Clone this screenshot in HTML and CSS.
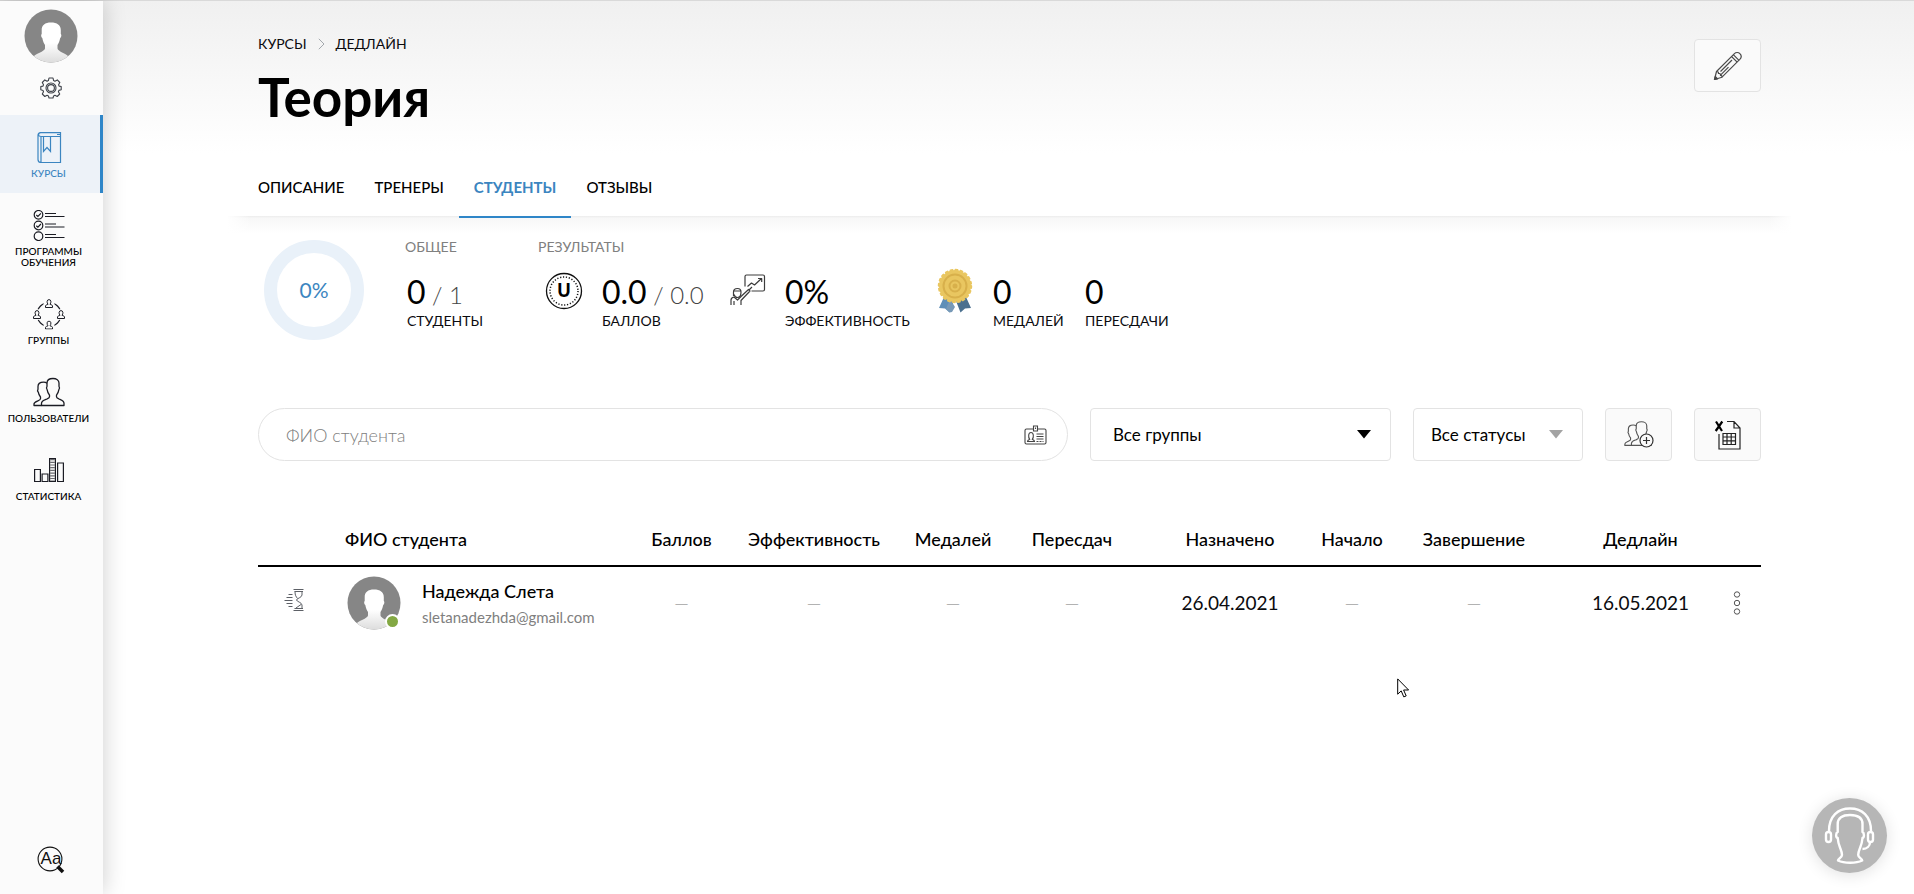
FILE: index.html
```html
<!DOCTYPE html>
<html lang="ru">
<head>
<meta charset="utf-8">
<title>Теория</title>
<link rel="stylesheet" href="styles.css">
</head>
<body>
<svg class="defs" aria-hidden="true">
  <defs>
    <linearGradient id="bust" x1="0" y1="0" x2="0" y2="1"><stop offset="0.5" stop-color="#fff"/><stop offset="1" stop-color="#dcdcdc"/></linearGradient>
    <clipPath id="round"><circle cx="27" cy="27" r="26.5"/></clipPath>
    <symbol id="avatar" viewBox="0 0 54 54">
      <g clip-path="url(#round)">
        <rect width="54" height="54" fill="#868686"/>
        <path fill="url(#bust)" d="M27 13.5c-6 0-9.3 2.6-9.3 7.500v4c-1 .6-.6 3.500.6 4 .6 3.500 1.700 5.500 2.700 7v3.500c0 3-10 5-13 9.500V54h38v-5c-3-4.500-12.500-6.500-12.500-9.500V36c1-1.500 2.100-3.500 2.700-7 1.200-.5 1.600-3.400.6-4v-4c0-4.900-3.800-7.500-9.800-7.500z"/>
      </g>
    </symbol>
    <symbol id="people" viewBox="0 0 32 31">
      <g fill="none" stroke="currentColor" stroke-width="1.3" stroke-linejoin="round">
        <path d="M8.500 28.500H31v-2.200c0-2.600-2.700-3.300-5-4.300-1.700-.7-2.500-1-2.500-2.300v-1.500c1.300-1.700 2-3.300 2.300-5.400.8-1 .9-2.500.2-3.500V6c0-2.700-2.500-4.500-6-4.500S14 3.300 14 6v3.300c-.7 1-.6 2.500.2 3.500.3 2.100 1 3.700 2.300 5.400v1.500c0 1.300-.8 1.600-2.500 2.300-2.500 1-5.500 1.700-5.500 4.300z"/>
        <path d="M14 6.300c-1-.9-2.300-1.100-3.500-1.100-3.300 0-5.500 1.600-5.500 4.300v2.700c-.6 1-.4 2.300.3 3 .3 2 1 3.300 2.200 4.800v1.700c0 1.100-1.700 1.700-3.200 2.400C2.300 25 1 25.600 1 27v1.500h7.500"/>
      </g>
    </symbol>
    <symbol id="person" viewBox="0 0 8 9">
      <path fill="#fbfbfb" stroke="currentColor" stroke-width="1" d="M.5 8.500V7c0-1 1.500-1.300 2.500-1.600C1.600 3.500 1.700.6 4 .6s2.400 2.900 1 4.800C6 5.700 7.500 6 7.500 7v1.500z"/>
    </symbol>
  </defs>
</svg>

<div class="app">
  <aside class="sidebar">
    <a class="profile" href="#" aria-label="Профиль"><svg width="54" height="54"><use href="#avatar"/></svg></a>
    <button class="gear" type="button" aria-label="Настройки">
      <svg width="22" height="22" viewBox="0 0 22 22" fill="none" stroke="#3c4048" stroke-width="1.100" stroke-linejoin="round">
        <path d="M9 1h4l.6 2.600 1.300.6 2.400-1.300 2.500 2.600-1.200 2.300.5 1.300L21.200 9.500v3.200l-2.300.7-.5 1.300 1.300 2.300-2.500 2.500-2.300-1.200-1.300.6L13 21H9l-.6-2.100-1.300-.6-2.300 1.200-2.500-2.500 1.200-2.300-.5-1.300L.8 12.700V9.500L3 9.100l.5-1.300-1.200-2.300 2.500-2.600 2.300 1.300 1.300-.6z"/>
        <circle cx="11" cy="11" r="5"/><circle cx="11" cy="11" r="3.400"/>
      </svg>
    </button>
    <nav class="menu">
      <a class="menu-item active" href="#">
        <svg width="32" height="31" viewBox="0 0 32 31" fill="none" stroke="currentColor" stroke-width="1.200">
          <path d="M27.500 4.500v26H8c-2 0-3-1-3-3V3.500C5 1.700 6 .6 7.700.6h19.800v3.900M27 4.500H8C4.500 4.500 5 .8 7.700.6M8 4.500v26M24 2.500h3"/>
          <path d="M10.500 4.500v15l3.500-4 3.500 4v-15"/>
        </svg>
        <span>КУРСЫ</span>
      </a>
      <a class="menu-item" href="#">
        <svg width="32" height="31" viewBox="0 0 32 31" fill="none" stroke="currentColor" stroke-width="1.200">
          <circle cx="5.500" cy="4.800" r="4.300"/><circle cx="5.500" cy="15.500" r="4.300"/><circle cx="5.500" cy="26.200" r="4.300"/>
          <path d="M3.300 5l1.600 1.500 3-3.200M3.300 15.700l1.600 1.500 3-3.200M12 3.500h11M12 6.500h19.500M12 14h11M12 17h19.500M12 24.500h11M12 27.500h19.500"/>
        </svg>
        <span>ПРОГРАММЫ ОБУЧЕНИЯ</span>
      </a>
      <a class="menu-item" href="#">
        <svg width="32" height="31" viewBox="0 0 32 31">
          <circle cx="16" cy="15.500" r="12" fill="none" stroke="currentColor" stroke-width="1.200"/>
          <g fill="#fbfbfb"><circle cx="16" cy="5" r="5.500"/><circle cx="16" cy="26" r="5.500"/><circle cx="4" cy="15.500" r="5.500"/><circle cx="28" cy="15.500" r="5.500"/></g>
          <use href="#person" x="12" y="0" width="8" height="9"/><use href="#person" x="12" y="21.500" width="8" height="9"/>
          <use href="#person" x="0" y="11" width="8" height="9"/><use href="#person" x="24" y="11" width="8" height="9"/>
        </svg>
        <span>ГРУППЫ</span>
      </a>
      <a class="menu-item" href="#">
        <svg width="32" height="31"><use href="#people"/></svg>
        <span>ПОЛЬЗОВАТЕЛИ</span>
      </a>
      <a class="menu-item" href="#">
        <svg width="32" height="31" viewBox="0 0 32 31" fill="none" stroke="currentColor" stroke-width="1.200">
          <path d="M1.600 26.500v-12h5.800v12zM9.100 26.500v-7.500h5.800v7.500zM16.600 26.500v-23h5.800v23zM24.600 26.500v-18.500h5.800v18.500z"/>
          <path d="M19.500 4v22" stroke-width="4.500" stroke-dasharray="1.200 1.500" opacity=".65"/>
        </svg>
        <span>СТАТИСТИКА</span>
      </a>
    </nav>
    <button class="zoom-text" type="button" aria-label="Размер текста">
      <svg width="28" height="28" viewBox="0 0 28 28">
        <circle cx="13" cy="13" r="11.900" fill="none" stroke="#111" stroke-width="1.100"/>
        <path d="M20.500 20.500l5.500 5.500" stroke="#111" stroke-width="3.500"/>
        <text x="14" y="18" class="aa">Aa</text>
      </svg>
    </button>
  </aside>

  <main class="page">
    <header class="page-head">
      <div>
        <nav class="crumbs">
          <a href="#">КУРСЫ</a>
          <svg width="7" height="12" viewBox="0 0 7 12" fill="none" stroke="#a3a8ad"><path d="M.8.800L6 6 .8 11.200"/></svg>
          <a href="#">ДЕДЛАЙН</a>
        </nav>
        <h1>Теория</h1>
      </div>
      <button class="square edit" type="button" aria-label="Редактировать">
        <svg width="30" height="30" viewBox="0 0 30 30" fill="none" stroke="#4a4a4a" stroke-width="1.200" stroke-linejoin="round">
          <path d="M1.500 28.500l2-8L21.200 2.800c1.800-1.800 4.300-1.600 5.700-.1 1.500 1.500 1.600 3.900-.1 5.700L9 26.200z"/>
          <path d="M3.500 20.500c1.500 0 2 .6 2 2 1.600-.2 2.200.5 2 1.900 1.300-.1 1.600.7 1.500 1.800M18.500 5.500l5.700 5.700M20.300 3.700l5.700 5.700M7.500 24.200l8-8M7.500 20.500L19 9"/>
          <path d="M1.500 28.500l.8-3 2.300 2.300z" fill="#333"/>
        </svg>
      </button>
    </header>

    <nav class="tabs">
      <a href="#">ОПИСАНИЕ</a>
      <a href="#">ТРЕНЕРЫ</a>
      <a class="current" href="#">СТУДЕНТЫ</a>
      <a href="#">ОТЗЫВЫ</a>
    </nav>

    <section class="stats">
      <div class="donut">0%</div>
      <div class="stat-group total">
        <h2>ОБЩЕЕ</h2>
        <div class="stat"><p>0<small> / 1</small></p><span>СТУДЕНТЫ</span></div>
      </div>
      <div class="stat-group">
        <h2>РЕЗУЛЬТАТЫ</h2>
        <div class="results">
          <svg class="coin" width="38" height="38" viewBox="0 0 38 38">
            <circle cx="19" cy="19" r="17.500" fill="none" stroke="#111" stroke-width="1.300"/>
            <circle cx="19" cy="19" r="14" fill="none" stroke="#111" stroke-width="1.500" stroke-dasharray="1.200 1.732"/>
            <text x="19" y="25" class="coin-letter">U</text>
          </svg>
          <div class="stat points"><p>0.0<small> / 0.0</small></p><span>БАЛЛОВ</span></div>
          <svg class="presenter" width="36" height="36" viewBox="0 0 36 36" fill="none" stroke="#3c3c3c" stroke-width="1.200" stroke-linejoin="round">
            <path d="M15 14.500V4.500c0-1 .5-1.500 1.500-1.500h16.500c1 0 1.500.5 1.500 1.500v13c0 1-.5 1.500-1.500 1.500H21.500"/>
            <path d="M17.500 14.500l4-3.500 3 2 7-6.500M28 6.500h3.700V10"/>
            <path d="M3.500 24v-4c0-2.500 1.500-3.500 4-3.500s3.500 1 3.500 3.500c0 3.500-1.500 5.500-3.500 5.500s-3-1.500-3.500-3M3.500 19h7"/>
            <path d="M1 33v-5c0-1.500 1-2.500 3-3l3.500 3 3.500-3.500L18.500 17.500l1.500 1.500L11 28.500V33M4 29v4M19 18l3-3"/>
          </svg>
          <div class="stat effect"><p>0%</p><span>ЭФФЕКТИВНОСТЬ</span></div>
          <svg class="medal" width="36" height="46" viewBox="0 0 36 46">
            <path d="M7 29l-5 11 6 .5 4.500 4L17 33z" fill="#5f8fb8"/><path d="M29 29l5 11-6 .5-4.500 4L19 33z" fill="#4b708f"/><path d="M13 31l5 8-3 5-2.500.5L9 41z" fill="#7799b7"/>
            <circle cx="18" cy="18" r="16" fill="#e9c660"/><circle cx="18" cy="18" r="16.200" fill="none" stroke="#e9c660" stroke-width="2" stroke-linecap="round" stroke-dasharray="2 3.090"/>
            <g fill="none" stroke="#d8b04b" stroke-width="2"><circle cx="18" cy="18" r="11.500"/><circle cx="18" cy="18" r="5.500"/></g>
            <circle cx="18" cy="18" r="2.500" fill="#d8b04b"/>
          </svg>
          <div class="stat medals"><p>0</p><span>МЕДАЛЕЙ</span></div>
          <div class="stat"><p>0</p><span>ПЕРЕСДАЧИ</span></div>
        </div>
      </div>
    </section>

    <form class="filters">
      <div class="search">
        <input type="text" placeholder="ФИО студента" aria-label="ФИО студента">
        <svg width="23" height="20" viewBox="0 0 23 20" fill="none" stroke="#444" stroke-width="1.100">
          <path d="M9 4H2.500C1.500 4 1 4.500 1 5.500v12C1 18.500 1.500 19 2.500 19h18c1 0 1.500-.5 1.500-1.500v-12C22 4.500 21.500 4 20.500 4H14M9.500 1h4v5h-4zM11.500 2.500V4"/>
          <path d="M3.500 16.500c0-1.500 1.200-1.800 2.200-2.200C4 12 4.300 7.500 7 7.500s3 4.500 1.300 6.800c1 .4 2.200.7 2.200 2.200zM12.500 9h7M12.500 11.500h7M12.500 14h7" /><path d="M12.500 16.500h7" stroke-dasharray="2 1"/>
        </svg>
      </div>
      <div class="select groups">
        <select aria-label="Группа"><option>Все группы</option></select>
        <svg width="14" height="9" viewBox="0 0 14 9"><path d="M0 0h14L7 8.500z" fill="#000"/></svg>
      </div>
      <div class="select statuses">
        <select aria-label="Статус"><option>Все статусы</option></select>
        <svg width="14" height="9" viewBox="0 0 14 9"><path d="M0 0h14L7 8.500z" fill="#a3a3a3"/></svg>
      </div>
      <button class="square" type="button" aria-label="Добавить студента">
        <svg width="30" height="30" viewBox="0 0 30 30"><g color="#555"><use href="#people" x="0" y="0" width="28" height="28"/></g>
          <circle cx="22.500" cy="20.500" r="6.500" fill="#fafafa" stroke="#333" stroke-width="1.200"/><path d="M19 20.500h7M22.500 17v7" stroke="#333" stroke-width="1.200"/></svg>
      </button>
      <button class="square" type="button" aria-label="Экспорт в Excel">
        <svg width="28" height="30" viewBox="0 0 28 30" fill="none" stroke="#222" stroke-width="1.200">
          <path d="M2 1.500l6 9.500M8.300 1.500L1.700 11" stroke="#000" stroke-width="2.200"/>
          <path d="M13 1.500h7l6 6.500V29H5V14M20 1.500V8h6M9 13.500h12.500v11H9zM9 17h12.500M9 20.800h12.500M13 13.500v11M17.200 13.500v11"/>
        </svg>
      </button>
    </form>

    <table class="students">
      <colgroup><col class="c-state"><col class="c-name"><col class="c-points"><col class="c-effect"><col class="c-medals"><col class="c-retakes"><col class="c-date"><col class="c-start"><col class="c-end"><col class="c-date"><col class="c-more"></colgroup>
      <thead>
        <tr><th></th><th class="name">ФИО студента</th><th>Баллов</th><th>Эффективность</th><th>Медалей</th><th>Пересдач</th><th class="assigned">Назначено</th><th>Начало</th><th>Завершение</th><th class="deadline">Дедлайн</th><th></th></tr>
      </thead>
      <tbody>
        <tr>
          <td>
            <svg class="hourglass" width="20" height="24" viewBox="0 0 20 24" fill="none" stroke="#5d6066" stroke-width="1">
              <path d="M9.500 1.500h10M10.500 3.500h8.500M10.500 20.500h8.500M9.500 22.500h10M18 3.500v3.500c0 2.500-5.500 3.500-5.500 5s5.500 2.500 5.500 5v3.500M11 3.500c0 4 1 5 2.500 7M17 16.500l-5 3.500M4.500 6.500h4M2.500 9.500h6M.5 12.500h8M2.500 15.500h6M4.500 18.500h4"/>
            </svg>
          </td>
          <td class="name">
            <div class="student">
              <span class="photo"><svg width="54" height="54"><use href="#avatar"/></svg><i class="online"></i></span>
              <div><a href="#">Надежда Слета</a><small>sletanadezhda@gmail.com</small></div>
            </div>
          </td>
          <td class="none">—</td><td class="none">—</td><td class="none">—</td><td class="none">—</td>
          <td class="assigned">26.04.2021</td><td class="none">—</td><td class="none">—</td><td class="deadline">16.05.2021</td>
          <td>
            <button class="more" type="button" aria-label="Действия"><svg width="8" height="24" viewBox="0 0 8 24" fill="none" stroke="#555"><circle cx="4" cy="3.500" r="2.700"/><circle cx="4" cy="12" r="2.700"/><circle cx="4" cy="20.500" r="2.700"/></svg></button>
          </td>
        </tr>
      </tbody>
    </table>
  </main>
</div>

<button class="support" type="button" aria-label="Поддержка">
  <svg width="75" height="75" viewBox="0 0 75 75" fill="none" stroke="#fff" stroke-width="2.400" stroke-linejoin="round">
    <path d="M26 62.500c0-1.500 4-3 4-5.500 0-3-1-5-2-7.500s-2-6-2.300-9.500c-2-.5-2.200-5 0-6V26c0-6 4.500-9 12.300-9s12.500 3 12.500 9v8c2 1 1.800 5.500 0 6-.3 3.500-1.300 7-2.300 9.500s-2 4.500-2 7.500c0 2.500 4 4 4 5.500-6 3-18.200 3-24.200 0z"/>
    <path d="M17 33c0-15 9-22.500 21-22.500S59 18 59 33M58 44c0 4-3 7-7.500 7"/>
    <rect x="14" y="34" width="5" height="10" rx="2.500"/><rect x="56" y="34" width="5" height="10" rx="2.500"/>
  </svg>
</button>
<svg class="cursor" width="13" height="20" viewBox="0 0 13 20" aria-hidden="true"><path d="M.7.900v15.300l3.500-3.300 2.600 6 2.400-1-2.600-5.900h5z" fill="#fff" stroke="#000"/></svg>
</body>
</html>
```

FILE: styles.css
```css
* { box-sizing: border-box; }
body { margin: 0; background: #fff; color: #0b0b0f; font-family: Lato, "Open Sans", sans-serif; font-size: 15px; line-height: 20px; }
a { color: inherit; text-decoration: none; }
button { padding: 0; border: 0; background: none; cursor: pointer; }
svg { display: block; flex: none; }
h1, h2, p { margin: 0; }
.defs { position: absolute; width: 0; height: 0; }

.app { display: flex; min-height: 100vh; border-top: 1px solid #d9d9d9; }

/* Sidebar */
.sidebar { position: relative; z-index: 1; display: flex; flex-direction: column; align-items: center; width: 103px; flex: none; padding: 8px 0 20px; background: #fbfbfb; box-shadow: 0 0 22px rgba(0, 0, 0, .2); }
.profile, .gear, .zoom-text { margin-right: 2px; }
.gear { margin-top: 14px; margin-bottom: 16px; }
.menu { width: 100%; }
.menu-item { display: flex; flex-direction: column; align-items: center; gap: 5px; padding: 17px 3px 14px 0; border-right: 3px solid transparent; color: #1b1c24; font-size: 10px; line-height: 11px; text-align: center; font-weight: 500; }
.menu-item span { max-width: 86px; color: #000; }
.menu-item.active { background: #edf2f8; border-color: #2f86c8; color: #3b85c0; }
.menu-item.active span { color: #3b85c0; }
.zoom-text { margin-top: auto; }
.aa { font-size: 17px; text-anchor: middle; fill: #111; }

/* Page */
.page { flex: 1; min-width: 0; padding: 33px 153px 40px 155px; background: linear-gradient(#f0f0f0, #fff 152px); }
.page-head { display: flex; justify-content: space-between; align-items: flex-start; }
.crumbs { display: flex; align-items: center; gap: 11px; font-size: 14px; }
h1 { margin-top: 11px; font-size: 53px; line-height: 64px; font-weight: 700; color: #000; }
.square { display: grid; place-items: center; flex: none; width: 67px; height: 53px; border: 1px solid #e3e3e3; border-radius: 4px; background: #fafafa; }
.edit { margin-top: 5px; }

.tabs { position: relative; display: flex; margin: 48px -31px 0; padding: 0 16px; font-weight: 500; }
.tabs::after { content: ""; position: absolute; top: 39px; left: 0; right: 0; height: 17px; background: linear-gradient(90deg, #fff, transparent 24px, transparent calc(100% - 24px), #fff), linear-gradient(#ececec, #f7f7f7 2px, #fff); }
.tabs a { position: relative; z-index: 1; padding: 0 15px 19px; border-bottom: 2px solid transparent; color: #000; }
.tabs .current { color: #3b85c0; border-color: #2f86c8; font-weight: 700; }

/* Summary */
.stats { position: relative; display: flex; padding-top: 19px; }
.donut { display: grid; place-items: center; width: 100px; height: 100px; margin: 3px 41px 0 6px; border: 13px solid #e9f1f9; border-radius: 50%; color: #3b85c0; font-size: 21px; }
.stat-group h2 { margin-bottom: 15px; color: #808080; font-size: 14px; line-height: 20px; font-weight: 400; }
.total { width: 133px; }
.total .stat { padding-left: 2px; }
.results { display: flex; }
.stat p { font-size: 32px; line-height: 40px; color: #000; white-space: nowrap; }
.stat small { font-size: 24px; line-height: 20px; font-weight: 300; color: #444; }
.stat span { display: block; font-size: 14px; line-height: 18px; }
.coin { margin: 0 19px 0 7px; }
.coin-letter { font-size: 18px; font-weight: 900; text-anchor: middle; fill: #000; }
.points { width: 128px; }
.presenter { margin-right: 19px; }
.effect { width: 152px; }
.medal { margin: -4px 20px 0 0; }
.medals { width: 92px; }

/* Filters */
.filters { display: flex; gap: 22px; margin-top: 68px; }
.search { position: relative; display: flex; align-items: center; flex: 1; }
.search input { width: 100%; height: 53px; padding: 0 60px 0 27px; border: 1px solid #e3e3e3; border-radius: 27px; background: #fff; font: 300 18px Lato, sans-serif; }
.search input::placeholder { color: #808080; opacity: 1; }
.search svg { position: absolute; right: 21px; }
.select { position: relative; display: flex; align-items: center; }
.select select { appearance: none; width: 100%; height: 53px; padding: 0 22px; border: 1px solid #e3e3e3; border-radius: 4px; background: #fff; color: #000; font: 400 17px Lato, sans-serif; }
.select svg { position: absolute; right: 20px; pointer-events: none; }
.groups { width: 301px; }
.statuses { width: 170px; }
.statuses select { padding: 0 17px; }

/* Students */
.students { width: 100%; margin-top: 53px; table-layout: fixed; border-collapse: collapse; text-align: center; }
.c-state { width: 72px; }
.c-name { width: 291px; }
.c-points { width: 121px; }
.c-effect { width: 144px; }
.c-medals { width: 134px; }
.c-retakes { width: 104px; }
.c-date { width: 172px; }
.c-start { width: 112px; }
.c-end { width: 132px; }
.c-more { width: 49px; }
th { padding: 13px 0 14px; border-bottom: 2px solid #000; font-size: 18px; line-height: 24px; font-weight: 500; color: #000; }
td { padding: 9px 0; font-size: 19px; line-height: 24px; }
.students .name { padding-left: 15px; text-align: left; }
.students .assigned { padding-left: 40px; }
.students .deadline { padding-left: 29px; }
.students .none { color: #777; font-size: 19px; font-weight: 300; }
.hourglass { margin: 0 0 6px 26px; }
.student { display: flex; align-items: center; gap: 21px; margin-left: 2px; }
.student a { display: block; margin-bottom: 4px; font-size: 18px; line-height: 24px; font-weight: 500; color: #000; }
.student small { display: block; font-size: 15px; line-height: 20px; color: #808080; }
.photo { position: relative; }
.online { position: absolute; right: 1px; bottom: 1px; width: 15px; height: 15px; border: 2px solid #fff; border-radius: 50%; background: #83a843; }
.more { display: block; margin: 0 auto; }

.support { position: fixed; right: 27px; bottom: 21px; width: 75px; height: 75px; border-radius: 50%; background: #b6b6b6; box-shadow: 0 2px 16px rgba(0, 0, 0, .12); }
.cursor { position: absolute; left: 1397px; top: 678px; pointer-events: none; }
```
